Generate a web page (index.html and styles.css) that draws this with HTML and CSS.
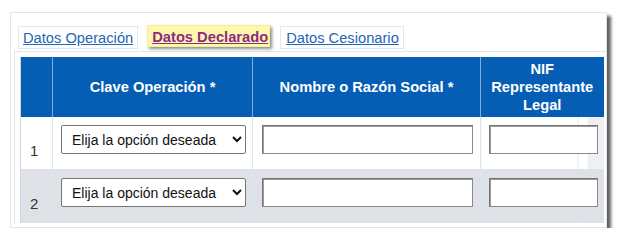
FILE: index.html
```html
<!DOCTYPE html>
<html lang="es">
<head>
<meta charset="utf-8">
<title>Datos Declarado</title>
<link rel="stylesheet" href="styles.css">
</head>
<body>
<div class="frame">
  <div class="tabs">
    <a class="tab" href="#">Datos Operación</a>
    <a class="tab active" href="#">Datos Declarado</a>
    <a class="tab tab-last" href="#">Datos Cesionario</a>
  </div>
  <div class="panel">
    <table class="grid">
      <colgroup>
        <col class="c-num">
        <col class="c-clave">
        <col class="c-nombre">
        <col class="c-nif">
      </colgroup>
      <thead>
        <tr>
          <th></th>
          <th>Clave Operación *</th>
          <th>Nombre o Razón Social *</th>
          <th>NIF<br>Representante<br>Legal</th>
        </tr>
      </thead>
      <tbody>
        <tr>
          <td class="num">1</td>
          <td><select class="sel"><option>Elija la opción deseada</option></select></td>
          <td><input class="inp inp-wide" type="text"></td>
          <td class="last"><input class="inp inp-nif" type="text"></td>
        </tr>
        <tr class="alt">
          <td class="num">2</td>
          <td><select class="sel"><option>Elija la opción deseada</option></select></td>
          <td><input class="inp inp-wide" type="text"></td>
          <td class="last"><input class="inp inp-nif" type="text"></td>
        </tr>
      </tbody>
    </table>
  </div>
</div>
</body>
</html>
```
FILE: styles.css
```css
html, body {
  margin: 0;
  padding: 0;
  background: #ffffff;
}

body {
  font-family: "Liberation Sans", Arial, sans-serif;
}

.frame {
  margin: 12px 0 0 10px;
  width: 597px;
  height: 216px;
  box-sizing: border-box;
  border: 1px solid #e2e5e9;
  box-shadow: 4px 4px 3px rgba(0, 0, 0, 0.62);
  padding: 12px 0 0 3px;
  overflow: hidden;
  background: #ffffff;
}

.tabs {
  display: flex;
  align-items: flex-start;
  gap: 9px;
  margin-left: 4px;
  height: 26px;
}

.tab {
  display: block;
  box-sizing: border-box;
  height: 23px;
  margin-top: 1px;
  padding: 2px 4px 0 4px;
  border: 1px solid #e1e8f1;
  background: #ffffff;
  font-size: 14.7px;
  line-height: 18px;
  color: #2366b3;
  text-decoration: underline;
  white-space: nowrap;
}

.tab.active {
  margin-top: 0;
  margin-right: 1px;
  height: 22px;
  padding: 2px 1px 0 4px;
  border-color: #f4ef9a;
  background: #fdf9a8;
  color: #8c2a86;
  font-weight: bold;
  box-shadow: 2px 2px 3px rgba(0, 0, 0, 0.45);
}

.tab.tab-last {
  padding-left: 5px;
}

.panel {
  border-top: 1px solid #dde6f1;
  border-left: 1px solid #dde6f1;
  padding: 5px 0 0 5px;
}

.grid {
  border-collapse: collapse;
  table-layout: fixed;
  width: 583px;
  border-left: 1px solid #cdd6df;
}

.c-num { width: 32px; }
.c-clave { width: 200px; }
.c-nombre { width: 228px; }
.c-nif { width: 123px; }

.grid th {
  height: 60px;
  padding: 0;
  background: #065db4;
  color: #ffffff;
  font-size: 14.7px;
  font-weight: bold;
  line-height: 18px;
  text-align: center;
  vertical-align: middle;
  border-left: 1px solid #86a9d3;
}

.grid th:first-child {
  border-left: none;
}

.grid td {
  padding: 8px 0 15px 8px;
  vertical-align: top;
  border-left: 1px solid #dce6f0;
  background: #ffffff;
}

.grid td:first-child {
  border-left: none;
}

.grid tr.alt td {
  background: #dee2e6;
  padding-top: 9px;
  padding-bottom: 16px;
}

.grid td.num {
  vertical-align: bottom;
  padding: 0 0 10px 9px;
  font-size: 15px;
  color: #3b3328;
}

.grid tr.alt td.num {
  padding-bottom: 11px;
  color: #333333;
}

.grid td.last {
  background: linear-gradient(to right, #ffffff 0, #ffffff 96px, #dfe8f1 96px, #dfe8f1 97px, #ffffff 97px, #ffffff 106px, #eef0f3 106px);
}

.grid tr.alt td.last {
  background: linear-gradient(to right, #dee2e6 0, #dee2e6 96px, #d5dfea 96px, #d5dfea 97px, #dee2e6 97px);
}

.sel {
  display: block;
  width: 185px;
  height: 29px;
  box-sizing: border-box;
  font-family: "Liberation Sans", Arial, sans-serif;
  font-size: 14px;
  color: #111111;
  background: #ffffff;
  border: 1px solid #767676;
  border-radius: 2px;
  padding: 0 4px 0 6px;
}

.inp {
  display: block;
  height: 29px;
  box-sizing: border-box;
  border: 1px solid #767676;
  border-right-color: #8a8a8a;
  border-bottom-color: #8a8a8a;
  box-shadow: inset 1px 1px 0 #9a9a9a;
  background: #ffffff;
  margin: 0;
  padding: 0;
}

.inp-wide {
  width: 211px;
  margin-left: 1px;
}

.inp-nif {
  width: 109px;
}
```
